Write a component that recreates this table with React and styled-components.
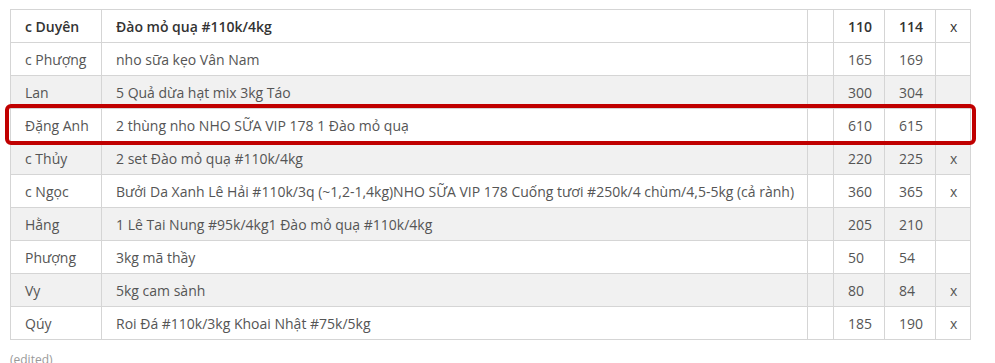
import React from 'react'
import styled, { createGlobalStyle } from 'styled-components'

const rows = [
  { name: 'c Phượng', item: 'nho sữa kẹo Vân Nam', a: '165', b: '169', x: '' },
  { name: 'Lan', item: '5 Quả dừa hạt mix 3kg Táo', a: '300', b: '304', x: '' },
  { name: 'Đặng Anh', item: '2 thùng nho NHO SỮA VIP 178 1 Đào mỏ quạ', a: '610', b: '615', x: '' },
  { name: 'c Thủy', item: '2 set Đào mỏ quạ #110k/4kg', a: '220', b: '225', x: 'x' },
  { name: 'c Ngọc', item: 'Bưởi Da Xanh Lê Hải #110k/3q (~1,2-1,4kg)NHO SỮA VIP 178 Cuống tươi #250k/4 chùm/4,5-5kg (cả rành)', a: '360', b: '365', x: 'x' },
  { name: 'Hằng', item: '1 Lê Tai Nung #95k/4kg1 Đào mỏ quạ #110k/4kg', a: '205', b: '210', x: '' },
  { name: 'Phượng', item: '3kg mã thầy', a: '50', b: '54', x: '' },
  { name: 'Vy', item: '5kg cam sành', a: '80', b: '84', x: 'x' },
  { name: 'Qúy', item: 'Roi Đá #110k/3kg Khoai Nhật #75k/5kg', a: '185', b: '190', x: 'x' },
]

function App() {
  return (
    <>
      <GlobalStyle />
      <Page>
        <TableWrap>
          <Table>
            <colgroup>
              <col style={{ width: 91 }} />
              <col style={{ width: 706 }} />
              <col style={{ width: 26 }} />
              <col style={{ width: 51 }} />
              <col style={{ width: 51 }} />
              <col style={{ width: 35 }} />
            </colgroup>
            <thead>
              <tr>
                <Th>c Duyên</Th>
                <Th>Đào mỏ quạ #110k/4kg</Th>
                <Th></Th>
                <Th>110</Th>
                <Th>114</Th>
                <Th $light>x</Th>
              </tr>
            </thead>
            <tbody>
              {rows.map((r, i) => (
                <Row key={i} $shaded={i % 2 === 1}>
                  <Td>{r.name}</Td>
                  <Td>{r.item}</Td>
                  <Td></Td>
                  <Td>{r.a}</Td>
                  <Td>{r.b}</Td>
                  <Td>{r.x}</Td>
                </Row>
              ))}
            </tbody>
          </Table>
          <Highlight />
        </TableWrap>
        <Edited>(edited)</Edited>
      </Page>
    </>
  )
}

export default App

const GlobalStyle = createGlobalStyle`
  body {
    margin: 0;
    background: #fff;
    font-family: "Open Sans", "Noto Sans", sans-serif;
  }
`

const Page = styled.div`
  padding: 9px 10px 0;
`

const TableWrap = styled.div`
  position: relative;
  width: 960px;
`

const Table = styled.table`
  border-collapse: collapse;
  table-layout: fixed;
  width: 960px;
  font-size: 14px;
  color: #555;
`

const Th = styled.th`
  height: 32px;
  padding: 0 14px;
  border: 1px solid #d5d5d5;
  text-align: left;
  font-weight: ${props => props.$light ? 400 : 600};
  color: #333;
  white-space: nowrap;
`

const Row = styled.tr`
  background: ${props => props.$shaded ? '#f1f1f1' : '#fff'};
`

const Td = styled.td`
  height: 32px;
  padding: 0 14px;
  border: 1px solid #d5d5d5;
  white-space: nowrap;
`

const Highlight = styled.div`
  position: absolute;
  left: -5px;
  top: 95px;
  width: 971px;
  height: 41px;
  box-sizing: border-box;
  border: 4px solid #c00000;
  border-radius: 6px;
`

const Edited = styled.div`
  margin-top: 11px;
  font-size: 12px;
  color: #999;
`
